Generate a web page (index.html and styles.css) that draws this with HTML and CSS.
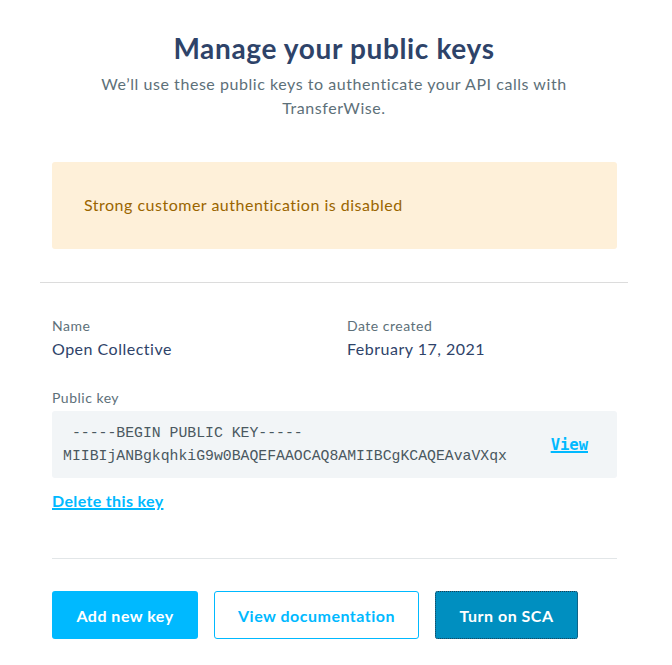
FILE: index.html
```html
<!DOCTYPE html>
<html>
<head>
<meta charset="utf-8">
<link rel="stylesheet" href="styles.css">
</head>
<body>
<div class="page">
  <header class="intro">
    <h1 class="title">Manage your public keys</h1>
    <p class="subtitle">We’ll use these public keys to authenticate your API calls with TransferWise.</p>
  </header>
  <div class="inner">
    <div class="alert">Strong customer authentication is disabled</div>
  </div>
  <hr class="divider">
  <section class="inner key">
    <div class="meta">
      <div class="field field-name">
        <div class="label">Name</div>
        <div class="value">Open Collective</div>
      </div>
      <div class="field">
        <div class="label">Date created</div>
        <div class="value">February 17, 2021</div>
      </div>
    </div>
    <div class="label pk-label">Public key</div>
    <div class="keybox">
      <pre class="keytext"> -----BEGIN PUBLIC KEY-----
MIIBIjANBgkqhkiG9w0BAQEFAAOCAQ8AMIIBCgKCAQEAvaVXqx</pre>
      <a class="view" href="#">View</a>
    </div>
    <a class="delete" href="#">Delete this key</a>
  </section>
  <div class="inner">
    <hr class="divider2">
    <div class="actions">
      <button class="btn btn-primary">Add new key</button>
      <button class="btn btn-outline">View documentation</button>
      <button class="btn btn-dark">Turn on SCA</button>
    </div>
  </div>
</div>
</body>
</html>
```
FILE: styles.css
```css
* { box-sizing: border-box; }
body {
  margin: 0;
  background: #fff;
  font-family: Lato, "Open Sans", sans-serif;
  color: #2e4369;
  letter-spacing: 0.5px;
}
.page {
  width: 588px;
  margin-left: 40px;
  padding-top: 28px;
}
.intro { text-align: center; }
.title {
  margin: 0;
  font-size: 28px;
  line-height: 40px;
  font-weight: 700;
  letter-spacing: 0.65px;
  color: #2e4369;
}
.subtitle {
  margin: 4px auto 0;
  width: 500px;
  font-size: 16px;
  line-height: 24px;
  letter-spacing: 0.55px;
  color: #5d7079;
}
.inner { padding: 0 11px 0 12px; }
.alert {
  margin-top: 42px;
  background: #fef0d9;
  border-radius: 3px;
  padding: 31px 32px 33px;
  font-size: 16px;
  line-height: 23px;
  color: #9a6500;
}
.divider {
  margin: 33px 0 0;
  border: 0;
  border-top: 1px solid #dcdcdc;
}
.key { padding-top: 33px; }
.meta { display: flex; }
.field-name { flex: none; width: 295px; }
.label {
  font-size: 14px;
  line-height: 20px;
  color: #5d7079;
}
.value {
  margin-top: 1px;
  font-size: 16px;
  line-height: 24px;
  color: #2e4369;
}
.pk-label { margin-top: 27px; }
.keybox {
  margin-top: 3px;
  background: #f2f5f7;
  border-radius: 3px;
  display: flex;
  align-items: center;
  padding: 10px 29px 10px 11px;
  height: 67px;
  letter-spacing: 0;
}
.keytext {
  flex: 1;
  margin: 0;
  font-family: "Liberation Mono", "DejaVu Sans Mono", monospace;
  font-size: 14.8px;
  line-height: 23px;
  color: #4a5860;
}
.view {
  font-family: "DejaVu Sans Mono", monospace;
  font-weight: 700;
  font-size: 15.5px;
  color: #00b9ff;
  text-decoration: underline;
  text-decoration-thickness: 2px;
}
.delete {
  display: inline-block;
  margin-top: 12px;
  font-size: 16px;
  line-height: 22px;
  font-weight: 700;
  letter-spacing: 0.35px;
  color: #00b9ff;
  text-decoration: underline;
  text-decoration-thickness: 2px;
}
.divider2 {
  margin: 46px 0 0;
  border: 0;
  border-top: 1px solid #e2e6e8;
}
.actions {
  display: flex;
  gap: 16px;
  margin-top: 32px;
}
.btn {
  height: 48px;
  border-radius: 3px;
  font-family: Lato, "Open Sans", sans-serif;
  font-size: 16px;
  font-weight: 700;
  letter-spacing: 0.5px;
  padding: 0 20px;
  border: 1px solid transparent;
}
.btn-primary { background: #00b9ff; color: #fff; width: 146px; }
.btn-outline { background: #fff; color: #00b9ff; border-color: #00b9ff; width: 205px; }
.btn-dark {
  background: #008fc0;
  color: #fff;
  width: 143px;
  outline: 1px dotted #1d3b50;
  outline-offset: -1px;
}
```
